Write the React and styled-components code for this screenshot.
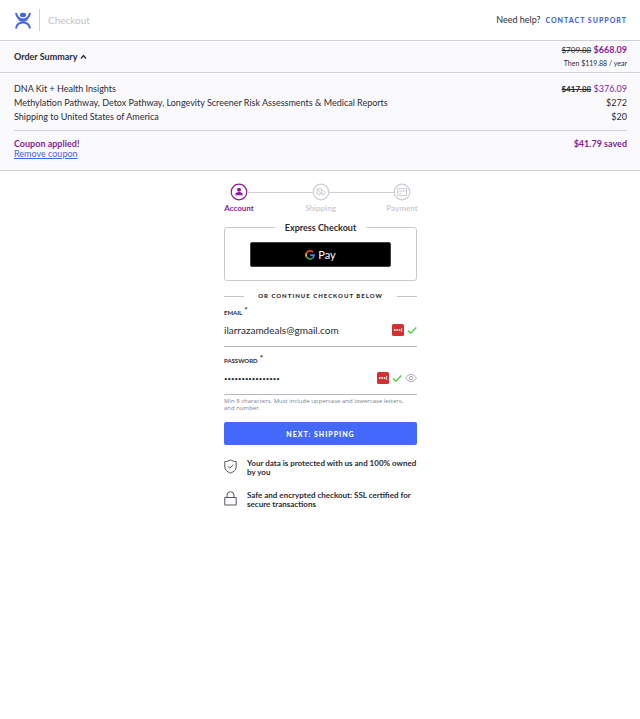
import React, { useState } from "react";
import styled, { createGlobalStyle } from "styled-components";

const GlobalStyle = createGlobalStyle`
  * {
    box-sizing: border-box;
  }

  body {
    margin: 0;
    background-color: #fff;
    color: #2b2b33;
    font-family: Lato, "Liberation Sans", sans-serif;
    font-size: 9px;
    line-height: 14px;
  }

  button,
  input {
    font-family: inherit;
    color: inherit;
  }
`;

const HeaderStyle = styled.header`
  display: flex;
  align-items: center;
  height: 41px;
  padding: 0 13px 0 14px;
  border-bottom: 1px solid #cfcfd6;
`;

const LogoStyle = styled.svg`
  width: 18px;
  height: 20px;
`;

const PageTitleStyle = styled.h1`
  flex: 1;
  height: 22px;
  margin: 0 0 0 7px;
  padding-left: 8px;
  border-left: 1px solid #cfcfd6;
  color: #c3c3c8;
  font-size: 10px;
  font-weight: 400;
  line-height: 22px;
`;

const SupportStyle = styled.a`
  margin-left: 5px;
  color: #4666dc;
  font-size: 7px;
  font-weight: 900;
  letter-spacing: 1px;
  text-decoration: none;
`;

const SummaryBarStyle = styled.div`
  display: flex;
  align-items: center;
  justify-content: space-between;
  height: 32px;
  padding: 0 13px 0 14px;
  border-bottom: 1px solid #cfcfd6;
  background-color: #fafafd;
`;

const ToggleStyle = styled.button`
  display: flex;
  align-items: center;
  gap: 3px;
  padding: 0;
  border: none;
  background: none;
  font-size: 9px;
  font-weight: 700;
`;

const TotalStyle = styled.div`
  text-align: right;
  line-height: 13px;
`;

const PlanStyle = styled.div`
  font-size: 7px;
`;

const OldPriceStyle = styled.s`
  font-size: 8px;
  font-weight: ${(props) => (props.$bold ? 700 : 400)};
`;

const NewPriceStyle = styled.span`
  color: #8a1a9b;
  font-weight: ${(props) => (props.$bold ? 700 : 400)};
`;

const DetailsStyle = styled.section`
  padding: 9px 13px 11px 14px;
  border-bottom: 1px solid #cfcfd6;
  background-color: #fafafd;
`;

const LinesStyle = styled.ul`
  margin: 0;
  padding: 0 0 6px;
  border-bottom: 1px solid #d4d4da;
  list-style: none;
`;

const LineStyle = styled.li`
  display: flex;
  justify-content: space-between;
`;

const CouponStyle = styled.div`
  display: flex;
  justify-content: space-between;
  padding-top: 8px;
  color: #8a1a9b;
  font-weight: 700;
  line-height: 10px;
`;

const RemoveStyle = styled.a`
  display: block;
  color: #3d63f0;
  font-weight: 400;
`;

const MainStyle = styled.main`
  padding: 12px 13px 20px 14px;
`;

const FormStyle = styled.form`
  max-width: 193px;
  margin: 0 auto;
`;

const StepsStyle = styled.ol`
  display: flex;
  margin: 0 0 7px;
  padding: 0;
  list-style: none;
`;

const StepStyle = styled.li`
  display: flex;
  flex: ${(props) => (props.$first ? "none" : "1")};
  color: ${(props) => (props.$active ? "#8a1a9b" : "#cdcdd4")};
`;

const StepLineStyle = styled.span`
  flex: 1;
  height: 1px;
  margin: 9px -7px 0;
  background-color: #cfcfd6;
`;

const StepBodyStyle = styled.div`
  display: flex;
  flex-direction: column;
  align-items: center;
  width: 30px;
  font-size: 8px;
  font-weight: 700;
  line-height: 14px;
  white-space: nowrap;
`;

const CircleStyle = styled.svg`
  display: block;
  width: 18px;
  height: 18px;
`;

const ExpressStyle = styled.fieldset`
  margin: 0;
  padding: 9px 25px 13px;
  border: 1px solid #c9c9d0;
  border-radius: 3px;
`;

const LegendStyle = styled.legend`
  margin: 0 auto;
  padding: 0 10px;
  font-size: 9px;
  font-weight: 700;
  line-height: 11px;
`;

const PayStyle = styled.button`
  display: flex;
  align-items: center;
  justify-content: center;
  gap: 3px;
  width: 100%;
  height: 25px;
  padding: 0;
  border: 1px solid #3c4043;
  border-radius: 2px;
  background-color: #000;
  color: #fff;
  font-size: 11px;
`;

const DividerStyle = styled.div`
  display: flex;
  align-items: center;
  justify-content: space-between;
  margin: 8px 0 5px;
  font-size: 6px;
  font-weight: 900;
  letter-spacing: 1px;
  white-space: nowrap;

  &::before,
  &::after {
    content: "";
    width: 20px;
    height: 1px;
    background-color: #c3c3cc;
  }
`;

const FieldStyle = styled.div`
  margin-bottom: 9px;
`;

const LabelStyle = styled.label`
  display: block;
  font-size: 6px;
  font-weight: 700;
  line-height: 10px;

  sup {
    margin-left: 2px;
    font-size: 8px;
    line-height: 0;
    vertical-align: 2px;
  }
`;

const ControlStyle = styled.div`
  display: flex;
  align-items: center;
  gap: 3px;
  height: 29px;
  padding-bottom: 4px;
  border-bottom: 1px solid #b9b9c2;
`;

const InputStyle = styled.input`
  flex: 1;
  min-width: 0;
  height: 20px;
  padding: 0;
  border: none;
  outline: none;
  background: none;
  font-size: ${(props) => (props.type === "password" ? "6px" : "10px")};
`;

const IconStyle = styled.svg`
  display: block;
  flex: none;
`;

const IconButtonStyle = styled.button`
  padding: 0;
  border: none;
  background: none;
`;

const HintStyle = styled.p`
  margin: 3px 0 10px;
  padding-right: 5px;
  color: #83838e;
  font-family: "Open Sans", sans-serif;
  font-size: 6px;
  line-height: 7px;
`;

const NextStyle = styled.button`
  display: block;
  width: 100%;
  height: 23px;
  margin-bottom: 14px;
  padding: 0;
  border: none;
  border-radius: 2px;
  background-color: #4468fa;
  color: #fff;
  font-size: 7px;
  font-weight: 900;
  letter-spacing: 1px;
`;

const TrustStyle = styled.div`
  display: flex;
  align-items: flex-start;
  gap: 10px;
  margin-bottom: 14px;
`;

const TrustTextStyle = styled.p`
  margin: 0;
  font-size: 8px;
  font-weight: 700;
  line-height: 9px;
`;

const Logo = () => (
  <LogoStyle viewBox="0 0 18 20" fill="none" stroke="#4666dc" strokeWidth="2" aria-hidden="true">
    <ellipse cx="9" cy="5" rx="3.2" ry="2.2" fill="#4666dc" stroke="none" />
    <path d="M2 3c1 5 3.500 6.500 7 6.500S15 8 16 3" />
    <path d="M2 18.500c.5-3.500 3-6 7-6s6.500 2.500 7 6" />
    <path d="M4.500 9.500c2.500 2 6.500 2 9 0M5.500 14 9 10.500l3.500 3.500" strokeWidth="1.300" />
  </LogoStyle>
);

const Manager = () => (
  <IconStyle width="12" height="12" viewBox="0 0 12 12" aria-hidden="true">
    <rect width="12" height="12" rx="1.500" fill="#d3302f" />
    <g fill="#fff">
      <circle cx="2.800" cy="6" r="0.900" />
      <circle cx="5.200" cy="6" r="0.900" />
      <circle cx="7.600" cy="6" r="0.900" />
      <rect x="9.300" y="4" width="0.800" height="4" />
    </g>
  </IconStyle>
);

const Check = () => (
  <IconStyle width="10" height="10" viewBox="0 0 10 10" fill="none" stroke="#55cf4c" strokeWidth="1.500" aria-hidden="true">
    <path d="M1 5.500 3.800 8.300 9.300 2.500" />
  </IconStyle>
);

const stepIcons = {
  Account: (
    <g fill="currentColor" stroke="none">
      <circle cx="9" cy="6.800" r="2" />
      <path d="M5.300 12.300c0-2.300 1.500-3.300 3.700-3.300s3.700 1 3.700 3.300z" />
    </g>
  ),
  Shipping: <path d="M5 6h4.500v5H5zM9.500 7.500H11l2 2V11H9.500M5 6l4.500 5M6.500 12.300h1M10.500 12.300h1" />,
  Payment: <path d="M4.500 5.500h9v7h-9zM4.500 8h9M6 10.500h2" />,
};

const Step = ({ name, active, first }) => (
  <StepStyle $active={active} $first={first} aria-current={active ? "step" : undefined}>
    {!first && <StepLineStyle />}
    <StepBodyStyle>
      <CircleStyle viewBox="0 0 18 18" fill="none" stroke="currentColor" aria-hidden="true">
        <circle cx="9" cy="9" r="7.800" strokeWidth="1.200" />
        {stepIcons[name]}
      </CircleStyle>
      {name}
    </StepBodyStyle>
  </StepStyle>
);

const App = () => {
  const [open, setOpen] = useState(true);
  const [email, setEmail] = useState("ilarrazamdeals@gmail.com");
  const [password, setPassword] = useState("0000000000000000");
  const [visible, setVisible] = useState(false);

  return (
    <>
      <GlobalStyle />
      <HeaderStyle>
        <Logo />
        <PageTitleStyle>Checkout</PageTitleStyle>
        <span>Need help?</span>
        <SupportStyle href="#support">CONTACT SUPPORT</SupportStyle>
      </HeaderStyle>

      <SummaryBarStyle>
        <ToggleStyle type="button" aria-expanded={open} onClick={() => setOpen(!open)}>
          Order Summary
          <IconStyle width="7" height="6" viewBox="0 0 7 6" fill="none" stroke="currentColor" strokeWidth="1.300">
            <path d="M1 4.500 3.500 1.500 6 4.500" />
          </IconStyle>
        </ToggleStyle>
        <TotalStyle>
          <div>
            <OldPriceStyle>$709.88</OldPriceStyle> <NewPriceStyle $bold>$668.09</NewPriceStyle>
          </div>
          <PlanStyle>Then $119.88 / year</PlanStyle>
        </TotalStyle>
      </SummaryBarStyle>

      {open && (
        <DetailsStyle>
          <LinesStyle>
            <LineStyle>
              <span>DNA Kit + Health Insights</span>
              <span>
                <OldPriceStyle $bold>$417.88</OldPriceStyle> <NewPriceStyle>$376.09</NewPriceStyle>
              </span>
            </LineStyle>
            <LineStyle>
              <span>
                Methylation Pathway, Detox Pathway, Longevity Screener Risk Assessments &amp; Medical Reports
              </span>
              <span>$272</span>
            </LineStyle>
            <LineStyle>
              <span>Shipping to United States of America</span>
              <span>$20</span>
            </LineStyle>
          </LinesStyle>
          <CouponStyle>
            <div>
              Coupon applied!
              <RemoveStyle href="#remove">Remove coupon</RemoveStyle>
            </div>
            <span>$41.79 saved</span>
          </CouponStyle>
        </DetailsStyle>
      )}

      <MainStyle>
        <FormStyle onSubmit={(e) => e.preventDefault()}>
          <StepsStyle>
            <Step name="Account" active first />
            <Step name="Shipping" />
            <Step name="Payment" />
          </StepsStyle>

          <ExpressStyle>
            <LegendStyle>Express Checkout</LegendStyle>
            <PayStyle type="button">
              <IconStyle width="10" height="10" viewBox="0 0 10 10" fill="none" strokeWidth="1.700" aria-hidden="true">
                <path d="M8 2.200A4 4 0 0 0 1.500 3.100" stroke="#ea4335" />
                <path d="M1.500 3.100a4 4 0 0 0 0 3.800" stroke="#fbbc04" />
                <path d="M1.500 6.900A4 4 0 0 0 7.500 8.100" stroke="#34a853" />
                <path d="M7.500 8.100A4 4 0 0 0 9 5.100H5.200" stroke="#4285f4" />
              </IconStyle>
              Pay
            </PayStyle>
          </ExpressStyle>

          <DividerStyle>OR CONTINUE CHECKOUT BELOW</DividerStyle>

          <FieldStyle>
            <LabelStyle htmlFor="email">
              EMAIL<sup>*</sup>
            </LabelStyle>
            <ControlStyle>
              <InputStyle id="email" type="email" value={email} onChange={(e) => setEmail(e.target.value)} />
              <Manager />
              <Check />
            </ControlStyle>
          </FieldStyle>

          <FieldStyle>
            <LabelStyle htmlFor="password">
              PASSWORD<sup>*</sup>
            </LabelStyle>
            <ControlStyle>
              <InputStyle
                id="password"
                type={visible ? "text" : "password"}
                value={password}
                onChange={(e) => setPassword(e.target.value)}
              />
              <Manager />
              <Check />
              <IconButtonStyle type="button" aria-label="Show password" onClick={() => setVisible(!visible)}>
                <IconStyle width="12" height="10" viewBox="0 0 12 10" fill="none" stroke="#a9a9b2">
                  <path d="M.7 5C2 2.700 3.800 1.500 6 1.500S10 2.700 11.300 5C10 7.300 8.200 8.500 6 8.500S2 7.300.7 5z" />
                  <circle cx="6" cy="5" r="1.700" />
                </IconStyle>
              </IconButtonStyle>
            </ControlStyle>
            <HintStyle>Min 8 characters. Must include uppercase and lowercase letters, and number.</HintStyle>
          </FieldStyle>

          <NextStyle type="submit">NEXT: SHIPPING</NextStyle>

          <TrustStyle>
            <IconStyle width="13" height="15" viewBox="0 0 13 15" fill="none" stroke="#55555e" aria-hidden="true">
              <path d="M6.500.8C4.800 2 3 2.500.8 2.600V8c0 3 2.700 5 5.700 6.200 3-1.200 5.700-3.200 5.700-6.200V2.600C10 2.500 8.200 2 6.500.8z" />
              <path d="M4 7.300 5.900 9.200 9.200 5.700" />
            </IconStyle>
            <TrustTextStyle>Your data is protected with us and 100% owned by you</TrustTextStyle>
          </TrustStyle>
          <TrustStyle>
            <IconStyle width="13" height="15" viewBox="0 0 13 15" fill="none" stroke="#55555e" aria-hidden="true">
              <path d="M.8 6.500h11.400v7.500H.8zM3 6.500V4.200a3.500 3.500 0 0 1 7 0v2.300" />
            </IconStyle>
            <TrustTextStyle>Safe and encrypted checkout: SSL certified for secure transactions</TrustTextStyle>
          </TrustStyle>
        </FormStyle>
      </MainStyle>
    </>
  );
};

export default App;
